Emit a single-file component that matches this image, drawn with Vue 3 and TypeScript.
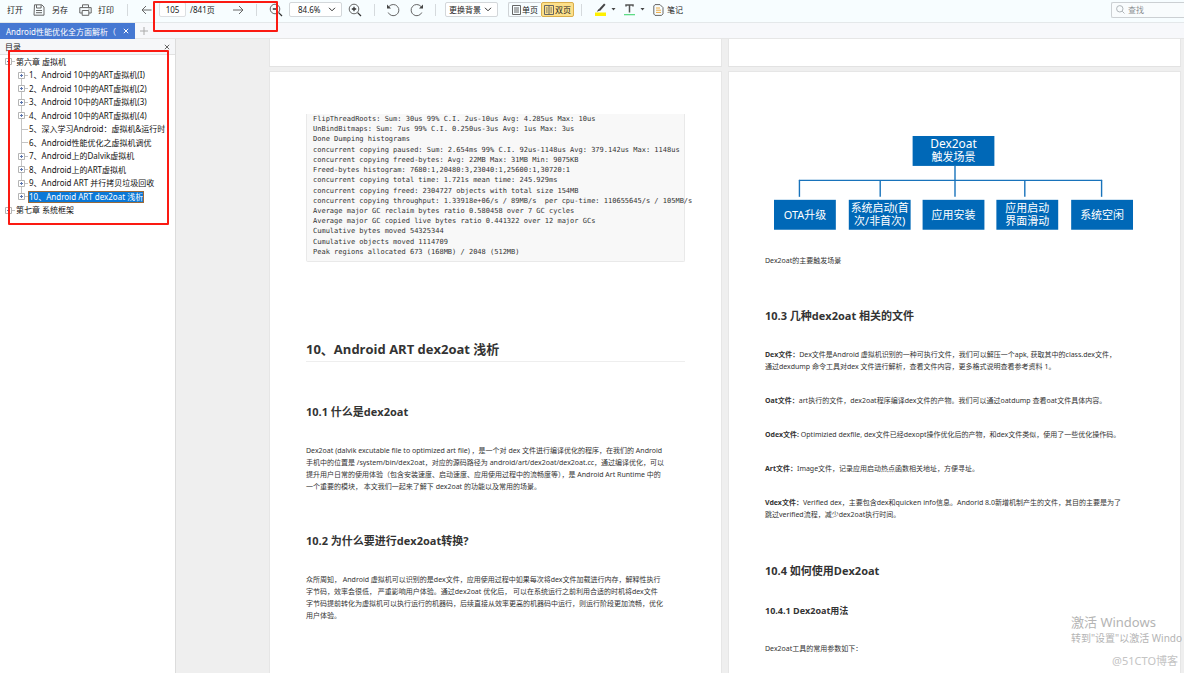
<script setup lang="ts">
import { ref } from 'vue'

interface TreeItem {
  label: string
  level: 0 | 1
  toggle: 'plus' | 'minus' | 'none'
  active?: boolean
}

interface DiagramNode {
  x: number
  stem: number
  lines: string[]
}

const pageNumber = ref('105')
const zoomLevel = ref('84.6%')
const background = ref('更换背景')
const query = ref('')

const tree: TreeItem[] = [
  { label: '第六章 虚拟机', level: 0, toggle: 'minus' },
  { label: '1、Android 10中的ART虚拟机(I)', level: 1, toggle: 'plus' },
  { label: '2、Android 10中的ART虚拟机(2)', level: 1, toggle: 'plus' },
  { label: '3、Android 10中的ART虚拟机(3)', level: 1, toggle: 'plus' },
  { label: '4、Android 10中的ART虚拟机(4)', level: 1, toggle: 'plus' },
  { label: '5、深入学习Android：虚拟机&运行时', level: 1, toggle: 'none' },
  { label: '6、Android性能优化之虚拟机调优', level: 1, toggle: 'none' },
  { label: '7、Android上的Dalvik虚拟机', level: 1, toggle: 'plus' },
  { label: '8、Android上的ART虚拟机', level: 1, toggle: 'plus' },
  { label: '9、Android ART 并行拷贝垃圾回收', level: 1, toggle: 'plus' },
  { label: '10、Android ART dex2oat 浅析', level: 1, toggle: 'plus', active: true },
  { label: '第七章 系统框架', level: 0, toggle: 'minus' },
]

const logLines: string[] = [
  'FlipThreadRoots: Sum: 30us 99% C.I. 2us-10us Avg: 4.285us Max: 10us',
  'UnBindBitmaps: Sum: 7us 99% C.I. 0.250us-3us Avg: 1us Max: 3us',
  'Done Dumping histograms',
  'concurrent copying paused: Sum: 2.654ms 99% C.I. 92us-1148us Avg: 379.142us Max: 1148us',
  'concurrent copying freed-bytes: Avg: 22MB Max: 31MB Min: 9075KB',
  'Freed-bytes histogram: 7680:1,20480:3,23040:1,25600:1,30720:1',
  'concurrent copying total time: 1.721s mean time: 245.929ms',
  'concurrent copying freed: 2304727 objects with total size 154MB',
  'concurrent copying throughput: 1.33918e+06/s / 89MB/s  per cpu-time: 110655645/s / 105MB/s',
  'Average major GC reclaim bytes ratio 0.580458 over 7 GC cycles',
  'Average major GC copied live bytes ratio 0.441322 over 12 major GCs',
  'Cumulative bytes moved 54325344',
  'Cumulative objects moved 1114709',
  'Peak regions allocated 673 (168MB) / 2048 (512MB)',
]

const nodes: DiagramNode[] = [
  { x: 9, stem: 34, lines: ['OTA升级'] },
  { x: 84, stem: 115, lines: ['系统启动(首', '次/非首次)'] },
  { x: 158, stem: 190, lines: ['应用安装'] },
  { x: 232, stem: 260, lines: ['应用启动', '界面滑动'] },
  { x: 307, stem: 337, lines: ['系统空闲'] },
]
</script>

<template>
  <div class="app">
    <header class="toolbar">
      <button class="tool open" type="button">打开</button>
      <button class="tool save" type="button">
        <svg width="12" height="12" viewBox="0 0 12 12"><path d="M1.5 .8h7.3L11 3v8.2H1z M3.5 1v3h4.6V1 M3 6.5h6 M3 8.7h6" /></svg>另存
      </button>
      <button class="tool print" type="button">
        <svg width="13" height="12" viewBox="0 0 13 12"><path d="M3.5 3.5V.8h6v2.7 M3 9H.8V3.6h11.4V9H10 M3.2 6.5h6.6v4.8H3.2z M9.5 5.1h1" /></svg>打印
      </button>
      <i class="rule r1"></i>
      <button class="icon prev" type="button" aria-label="上一页">
        <svg width="12" height="12" viewBox="0 0 12 12"><path d="M10.5 6H1 M5 2 1 6l4 4" /></svg>
      </button>
      <input id="page" v-model="pageNumber" class="page-input" type="text" aria-label="页码" />
      <label class="total" for="page">/841页</label>
      <button class="icon next" type="button" aria-label="下一页">
        <svg width="12" height="12" viewBox="0 0 12 12"><path d="M1 6h10 M7 2l4 4-4 4" /></svg>
      </button>
      <i class="rule r2"></i>
      <button class="icon zoom-out" type="button" aria-label="缩小">
        <svg width="14" height="14" viewBox="0 0 14 14"><circle cx="6" cy="6" r="4.8" /><path class="thick" d="M3.8 6h4.4 M9.6 9.6 13 13" /></svg>
      </button>
      <div class="drop zoom-select">
        <select v-model="zoomLevel" aria-label="缩放比例"><option>84.6%</option></select>
        <svg width="8" height="5" viewBox="0 0 8 5"><path d="m1 .8 3 3 3-3" /></svg>
      </div>
      <button class="icon zoom-in" type="button" aria-label="放大">
        <svg width="14" height="14" viewBox="0 0 14 14"><circle cx="6" cy="6" r="4.8" /><path class="thick" d="M3.8 6h4.4M6 3.8v4.4 M9.6 9.6l3.4 3.4" /></svg>
      </button>
      <i class="rule r3"></i>
      <button class="icon undo" type="button" aria-label="向左旋转">
        <svg width="14" height="14" viewBox="0 0 14 14"><path d="M3 3.5a5.6 5.6 0 1 1-.8 6" /><path class="solid" d="M1 1.6v4h4z" /></svg>
      </button>
      <button class="icon redo" type="button" aria-label="向右旋转">
        <svg width="14" height="14" viewBox="0 0 14 14"><path d="M11 3.5a5.6 5.6 0 1 0 .8 6" /><path class="solid" d="M13 1.6v4H9z" /></svg>
      </button>
      <i class="rule r4"></i>
      <div class="drop bg-select">
        <select v-model="background" aria-label="背景"><option>更换背景</option></select>
        <svg width="8" height="5" viewBox="0 0 8 5"><path d="m1 .8 3 3 3-3" /></svg>
      </div>
      <div class="segment">
        <button type="button">
          <svg width="9" height="10" viewBox="0 0 9 10"><path d="M.5.5h8v9h-8z M2 3h5M2 5h5M2 7h5" /></svg>单页
        </button>
        <button type="button" class="on">
          <svg width="10" height="10" viewBox="0 0 10 10"><path d="M.5.5h9v9h-9z M5 .5v9 M2 3h1.6M2 5h1.6M2 7h1.6M6.4 3H8M6.4 5H8M6.4 7H8" /></svg>双页
        </button>
      </div>
      <i class="rule r5"></i>
      <button class="icon marker" type="button" aria-label="高亮">
        <svg width="12" height="13" viewBox="0 0 12 13"><path class="pen" d="M9.8 1.2 4.5 7" /><path class="solid" d="M3.6 6 1.8 8.8l3.5-1.3z" /><path class="yellow" d="M0 9.5h11V13H0z" /></svg>
      </button>
      <button class="icon arrow" type="button" aria-label="高亮颜色"><svg width="5" height="3" viewBox="0 0 5 3"><path class="solid" d="M.5 0h4l-2 2.5z" /></svg></button>
      <button class="icon letter" type="button" aria-label="下划线">
        <svg width="12" height="13" viewBox="0 0 12 13"><path class="stem" d="M2 3.6V2h7v1.6 M5.5 2v7.5" /><path class="green" d="M0 11h11v1.3H0z" /></svg>
      </button>
      <button class="icon arrow" type="button" aria-label="下划线颜色"><svg width="5" height="3" viewBox="0 0 5 3"><path class="solid" d="M.5 0h4l-2 2.5z" /></svg></button>
      <button class="tool note" type="button">
        <svg width="11" height="12" viewBox="0 0 11 12"><path d="M2 .6h5l3 3v6.2L8.6 11.4H2L.8 10V2z" /><path class="orange" d="M3 4h4M3 6.2h5M3 8.4h5" /></svg>笔记
      </button>
      <div class="search">
        <svg width="9" height="9" viewBox="0 0 9 9"><circle cx="3.8" cy="3.8" r="3.2" /><path d="m6.2 6.2 2.3 2.3" /></svg>
        <input v-model="query" type="text" placeholder="查找" aria-label="查找" />
      </div>
    </header>

    <nav class="tabs">
      <div class="tab">
        <span class="tab-title">Android性能优化全方面解析（</span>
        <button type="button" class="tab-close" aria-label="关闭标签">
          <svg width="6" height="6" viewBox="0 0 6 6"><path d="m.8.8 4.4 4.4M5.2.8.8 5.2" /></svg>
        </button>
      </div>
      <button type="button" class="tab-add" aria-label="新标签">
        <svg width="8" height="8" viewBox="0 0 8 8"><path d="M4 0v8M0 4h8" /></svg>
      </button>
    </nav>

    <div class="body">
      <aside class="sidebar">
        <div class="side-head">
          <span>目录</span>
          <button type="button" aria-label="关闭目录">
            <svg width="6" height="6" viewBox="0 0 6 6"><path d="m.8.8 4.4 4.4M5.2.8.8 5.2" /></svg>
          </button>
        </div>
        <ul class="tree">
          <li v-for="item in tree" :key="item.label" :class="{ child: item.level === 1, last: item.active }">
            <svg v-if="item.toggle !== 'none'" class="toggle" width="7" height="7" viewBox="0 0 7 7">
              <path class="frame" d="M.5.5h6v6h-6z" />
              <path class="sign" :d="item.toggle === 'plus' ? 'M2 3.5h3M3.5 2v3' : 'M2 3.5h3'" />
            </svg>
            <span v-else class="toggle"></span>
            <span class="dash"></span>
            <a href="#" :class="{ active: item.active }">{{ item.label }}</a>
          </li>
        </ul>
      </aside>

      <main class="viewer">
        <div class="sheet stub"></div>
        <div class="sheet stub"></div>

        <article class="sheet left">
          <pre class="log"><code v-for="line in logLines" :key="line">{{ line }}</code></pre>
          <h2>10、Android ART dex2oat 浅析</h2>
          <h3>10.1 什么是dex2oat</h3>
          <p>
            Dex2oat (dalvik excutable file to optimized art file) ，是一个对 dex 文件进行编译优化的程序，在我们的 Android<br />
            手机中的位置是 /system/bin/dex2oat，对应的源码路径为 android/art/dex2oat/dex2oat.cc，通过编译优化，可以<br />
            提升用户日常的使用体验（包含安装速度、启动速度、应用使用过程中的流畅度等），是 Android Art Runtime 中的<br />
            一个重要的模块， 本文我们一起来了解下 dex2oat 的功能以及常用的场景。
          </p>
          <h3 class="second">10.2 为什么要进行dex2oat转换?</h3>
          <p>
            众所周知， Android 虚拟机可以识别的是dex文件，应用使用过程中如果每次将dex文件加载进行内存，解释性执行<br />
            字节码，效率会很低， 严重影响用户体验。通过dex2oat 优化后， 可以在系统运行之前利用合适的时机将dex文件<br />
            字节码提前转化为虚拟机可以执行运行的机器码，后续直接从效率更高的机器码中运行，则运行阶段更加流畅，优化<br />
            用户体验。
          </p>
        </article>

        <article class="sheet right">
          <svg class="diagram" viewBox="0 0 380 96" role="img" aria-label="Dex2oat触发场景">
            <path class="wires" d="M190.5 31v14 M34 45.5h304" />
            <rect x="148" y="1" width="82" height="30" />
            <text x="189" y="13" class="latin">Dex2oat</text>
            <text x="189" y="26">触发场景</text>
            <g v-for="node in nodes" :key="node.x">
              <path class="wires" :d="`M${node.stem}.5 45v17`" />
              <rect :x="node.x" y="65" width="62" height="30" />
              <text
                v-for="(line, i) in node.lines"
                :key="line"
                :x="node.x + 31"
                :y="node.lines.length === 1 ? 84 : 77 + i * 13"
              >{{ line }}</text>
            </g>
          </svg>
          <p class="caption">Dex2oat的主要触发场景</p>
          <h3 class="related">10.3 几种dex2oat 相关的文件</h3>
          <div class="files">
            <p>
              <strong>Dex文件：</strong>Dex文件是Android 虚拟机识别的一种可执行文件，我们可以解压一个apk, 获取其中的class.dex文件，<br />
              通过dexdump 命令工具对dex 文件进行解析，查看文件内容，更多格式说明查看参考资料 1。
            </p>
            <p><strong>Oat文件：</strong>art执行的文件，dex2oat程序编译dex文件的产物。我们可以通过oatdump 查看oat文件具体内容。</p>
            <p><strong>Odex文件:</strong> Optimizied dexfile, dex文件已经dexopt操作优化后的产物，和dex文件类似，使用了一些优化操作码。</p>
            <p><strong>Art文件：</strong>Image文件，记录应用启动热点函数相关地址，方便寻址。</p>
            <p>
              <strong>Vdex文件：</strong>Verified dex，主要包含dex和quicken info信息。Andorid 8.0新增机制产生的文件，其目的主要是为了<br />
              跳过verified流程，减少dex2oat执行时间。
            </p>
          </div>
          <h3>10.4 如何使用Dex2oat</h3>
          <h4>10.4.1 Dex2oat用法</h4>
          <p>Dex2oat工具的常用参数如下：</p>
        </article>
      </main>
    </div>

    <div class="frame-box top"></div>
    <div class="frame-box side"></div>
    <div class="watermark">
      <div class="big">激活 Windows</div>
      <div class="small">转到"设置"以激活 Windo</div>
      <div class="site">@51CTO博客</div>
    </div>
  </div>
</template>

<style>
body {
  margin: 0;
  overflow: hidden;
}
</style>

<style scoped>
.app {
  position: relative;
  display: flex;
  flex-direction: column;
  height: 100vh;
  overflow: hidden;
  background: #efefef;
  color: #222;
  font-family: 'Noto Sans', 'Noto Sans CJK SC', sans-serif;
  font-size: 8px;
}
.app * {
  box-sizing: border-box;
}
button,
input,
select {
  margin: 0;
  padding: 0;
  border: 0;
  background: none;
  color: inherit;
  font: inherit;
  outline: 0;
}
svg {
  flex: none;
  fill: none;
  stroke: #666;
  stroke-width: 1;
}
.solid {
  fill: #444;
  stroke: none;
}
.thick {
  stroke: #333;
  stroke-width: 1.3;
}
.pen {
  stroke: #444;
  stroke-width: 2;
}
.stem {
  stroke: #555;
  stroke-width: 1.5;
}
.yellow {
  fill: #fff000;
  stroke: none;
}
.green {
  fill: #5fdc86;
  stroke: none;
}
.orange {
  stroke: #eda83c;
}

.toolbar {
  display: flex;
  flex: none;
  align-items: center;
  height: 23px;
  padding: 0 0 3px 7px;
  border-bottom: 1px solid #e4e8ea;
  background: #f7fdff;
  white-space: nowrap;
}
.toolbar > * {
  flex: none;
}
.tool,
.icon {
  display: flex;
  align-items: center;
  height: 16px;
}
.open {
  width: 26px;
}
.save {
  gap: 7px;
  width: 46px;
}
.print {
  gap: 6px;
  width: 48px;
}
.rule {
  width: 1px;
  height: 12px;
  background: #d5dadd;
}
.prev {
  width: 18px;
  margin-left: 13px;
}
.page-input {
  width: 27px;
  height: 15px;
  border: 1px solid #dcdfe2;
  border-radius: 2px;
  background: #fff;
  text-align: center;
}
.total {
  width: 46px;
  padding-left: 4px;
}
.next {
  width: 24px;
}
.zoom-out {
  width: 20px;
  margin-left: 12px;
}
.drop {
  display: flex;
  align-items: center;
  width: 53px;
  height: 15px;
  padding-right: 5px;
  border: 1px solid #d3d7da;
  border-radius: 2px;
  background: #fff;
}
.drop select {
  flex: 1;
  min-width: 0;
  height: 13px;
  padding-left: 8px;
  appearance: none;
}
.drop.bg-select select {
  padding-left: 3px;
}
.drop svg {
  stroke: #333;
}
.zoom-in {
  margin-left: 6px;
}
.r3 {
  margin-left: 12px;
}
.undo {
  margin-left: 11px;
}
.redo {
  margin-left: 10px;
}
.r4 {
  margin-left: 11px;
}
.bg-select {
  margin-left: 9px;
}
.segment {
  display: flex;
  height: 15px;
  margin-left: 10px;
}
.segment button {
  display: flex;
  align-items: center;
  gap: 1px;
  width: 33px;
  padding-left: 3px;
  border: 1px solid #cfd3d6;
  border-right: 0;
  border-radius: 2px 0 0 2px;
}
.segment .on {
  padding-left: 2px;
  border: 1px solid #d9ae4c;
  border-radius: 2px;
  background: #fce08a;
}
.r5 {
  margin-left: 7px;
}
.marker {
  margin-left: 13px;
}
.arrow {
  width: 13px;
  padding-left: 4px;
}
.letter {
  margin-left: 4px;
}
.note {
  gap: 3px;
  margin-left: 4px;
}
.toolbar .search {
  display: flex;
  align-items: center;
  gap: 3px;
  width: 73px;
  height: 16px;
  margin-left: auto;
  padding-left: 4px;
  border: 1px solid #ccd0d3;
  border-right: 0;
  border-radius: 2px 0 0 2px;
  background: #f9fcfd;
}
.search svg {
  stroke: #aeb4b8;
}
.search input {
  flex: 1;
  min-width: 0;
}
.search input::placeholder {
  color: #8d9194;
  opacity: 1;
}

.tabs {
  display: flex;
  flex: none;
  height: 16px;
  border-bottom: 1px solid #e6e6e6;
  background: #f7f8fb;
}
.tab {
  display: flex;
  align-items: center;
  width: 135px;
  height: 16px;
  padding: 0 6px;
  background: #4678d2;
  color: #fff;
}
.tab-title {
  flex: 1;
  white-space: nowrap;
}
.tab-close {
  display: flex;
}
.tab-close svg {
  stroke: #fff;
}
.tab-add {
  display: flex;
  align-items: center;
  padding-left: 5px;
}
.tab-add svg {
  stroke: #aaa;
}

.body {
  display: flex;
  flex: 1;
  min-height: 0;
}
.sidebar {
  flex: none;
  width: 176px;
  border-right: 1px solid #dcdcdc;
  background: #fff;
}
.side-head {
  display: flex;
  align-items: center;
  justify-content: space-between;
  height: 16px;
  padding: 0 5px;
  border-bottom: 1px solid #e2e2e2;
  background: #f6f7f9;
}
.side-head button {
  display: flex;
}
.tree {
  display: grid;
  grid-auto-rows: 1fr;
  width: 168px;
  height: 162px;
  margin: 0;
  padding: 0 0 0 5px;
  color: #111;
  list-style: none;
  white-space: nowrap;
}
.tree li {
  display: flex;
  align-items: center;
}
.tree .child {
  padding-left: 13px;
  background: linear-gradient(#c4c4c4, #c4c4c4) 16px 0 / 1px 100% no-repeat;
}
.tree .last {
  background-size: 1px 50%;
}
.toggle {
  width: 7px;
  height: 7px;
}
.frame {
  fill: #fff;
  stroke: #b4b4b4;
}
.sign {
  stroke: #5a74ad;
}
.dash {
  width: 3px;
  height: 1px;
  background: #c4c4c4;
}
span.toggle {
  height: 1px;
  background: linear-gradient(#c4c4c4, #c4c4c4) 3px 0 no-repeat;
}
.tree a {
  padding: 0 1px;
  line-height: 12px;
  color: inherit;
  text-decoration: none;
}
.tree .active {
  outline: 1px solid #9a6a3a;
  outline-offset: -1px;
  background: #0a78d7;
  color: #fff;
}

.viewer {
  display: grid;
  flex: 1;
  grid-template-columns: 1fr 1fr;
  grid-template-rows: 28px 1fr;
  gap: 4px 6px;
  min-width: 0;
  padding: 0 3px 0 93px;
  overflow: hidden;
}
.sheet {
  min-width: 0;
  padding: 0 36px;
  border: 1px solid #e6e6e6;
  border-bottom: 0;
  background: #fff;
  color: #333;
  font-size: 7px;
  white-space: nowrap;
}
.stub {
  border-top: 0;
  border-bottom: 1px solid #e2e2e2;
}
.log {
  display: grid;
  grid-auto-rows: 1fr;
  height: 148px;
  margin: 42px 0 0;
  padding: 0 6px 4px;
  border: 1px solid #e9e9e9;
  border-top: 0;
  border-radius: 0 0 2px 2px;
  background: #f8f8f8;
  line-height: 10px;
}
.log code {
  font-family: 'DejaVu Sans Mono', monospace;
  font-size: 7px;
}
h2,
h3,
h4,
p {
  margin: 0;
}
h2,
h3,
h4 {
  font-family: 'Open Sans', 'Noto Sans CJK SC', sans-serif;
}
h2 {
  margin-top: 77px;
  padding-bottom: 2px;
  border-bottom: 1px solid #eee;
  font-size: 13px;
  line-height: 20px;
}
h3 {
  margin-top: 42px;
  font-size: 11px;
  line-height: 16px;
}
h4 {
  margin-top: 25px;
  font-size: 9px;
  line-height: 14px;
}
p {
  margin-top: 25px;
  line-height: 12px;
}
.second {
  margin-top: 40px;
}
.related {
  margin-top: 41px;
}
.diagram {
  display: block;
  width: 100%;
  margin-top: 63px;
}
.diagram rect {
  fill: #0068b7;
  stroke: none;
}
.wires {
  stroke: #1873bb;
  stroke-width: 1.4;
}
.diagram text {
  fill: #fff;
  stroke: none;
  font-size: 11px;
  text-anchor: middle;
}
.diagram .latin {
  font-size: 12px;
}
.caption {
  margin-top: 24px;
}
.files {
  display: flex;
  flex-direction: column;
  gap: 22px;
  margin-top: 25px;
}
.files p {
  margin: 0;
}

.frame-box {
  position: absolute;
  border: 2px solid #fb1a12;
  border-radius: 1px;
  pointer-events: none;
}
.frame-box.top {
  top: 1px;
  left: 153px;
  width: 125px;
  height: 31px;
}
.frame-box.side {
  top: 50px;
  left: 8px;
  width: 161px;
  height: 175px;
}
.watermark {
  position: absolute;
  right: 0;
  bottom: 4px;
  width: 113px;
  color: #b4b4b4;
  white-space: nowrap;
  pointer-events: none;
}
.big {
  font-size: 13px;
  line-height: 18px;
}
.small {
  font-size: 10px;
  line-height: 14px;
}
.site {
  margin-top: 8px;
  padding-right: 6px;
  color: #c4c4c4;
  font-size: 11px;
  line-height: 16px;
  text-align: right;
}
</style>
